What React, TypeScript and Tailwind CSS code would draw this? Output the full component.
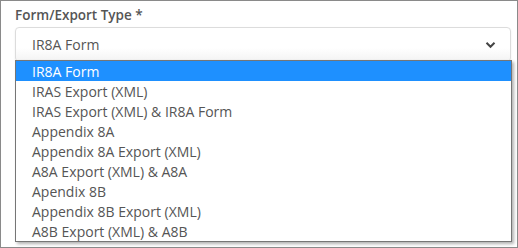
import React from 'react';

const options = [
  'IR8A Form',
  'IRAS Export (XML)',
  'IRAS Export (XML) & IR8A Form',
  'Appendix 8A',
  'Appendix 8A Export (XML)',
  'A8A Export (XML) & A8A',
  'Apendix 8B',
  'Appendix 8B Export (XML)',
  'A8B Export (XML) & A8B',
];

const App = () => {
  return (
    <div className="w-[518px] h-[248px] bg-white border border-[#8a8a8a] font-['Open_Sans',sans-serif] overflow-hidden">
      <div className="pl-[14px] pr-[6px] pt-[5px]">
        <label className="block text-[13.5px] font-semibold text-[#555] leading-[18px]">
          Form/Export Type *
        </label>

        <div className="relative mt-[3px] w-[496px]">
          {/* closed select */}
          <div className="h-[35px] rounded-[4px] border border-[#dcdcdc] bg-gradient-to-b from-white from-60% to-[#f3f3f3] flex items-center justify-between pl-[16px] pr-[14px] shadow-[0_1px_2px_rgba(0,0,0,0.08)]">
            <span className="text-[14px] text-[#555]">IR8A Form</span>
            <svg width="11" height="8" viewBox="0 0 11 8" className="text-[#444]">
              <path d="M1.5 1.8 L5.5 5.8 L9.5 1.8" fill="none" stroke="currentColor" strokeWidth="2" />
            </svg>
          </div>

          {/* open options list */}
          <div className="absolute left-0 top-[33px] w-[497px] bg-white border border-[#767676] shadow-[2px_2px_3px_rgba(0,0,0,0.3)]">
            {options.map((opt, i) => (
              <div
                key={opt}
                className={
                  i === 0
                    ? 'h-[20px] pl-[16px] flex items-center text-[14px] bg-[#1e90ff] text-white'
                    : 'h-[20px] pl-[16px] flex items-center text-[14px] text-[#555]'
                }
              >
                {opt}
              </div>
            ))}
          </div>
        </div>
      </div>
    </div>
  );
};

export default App;
